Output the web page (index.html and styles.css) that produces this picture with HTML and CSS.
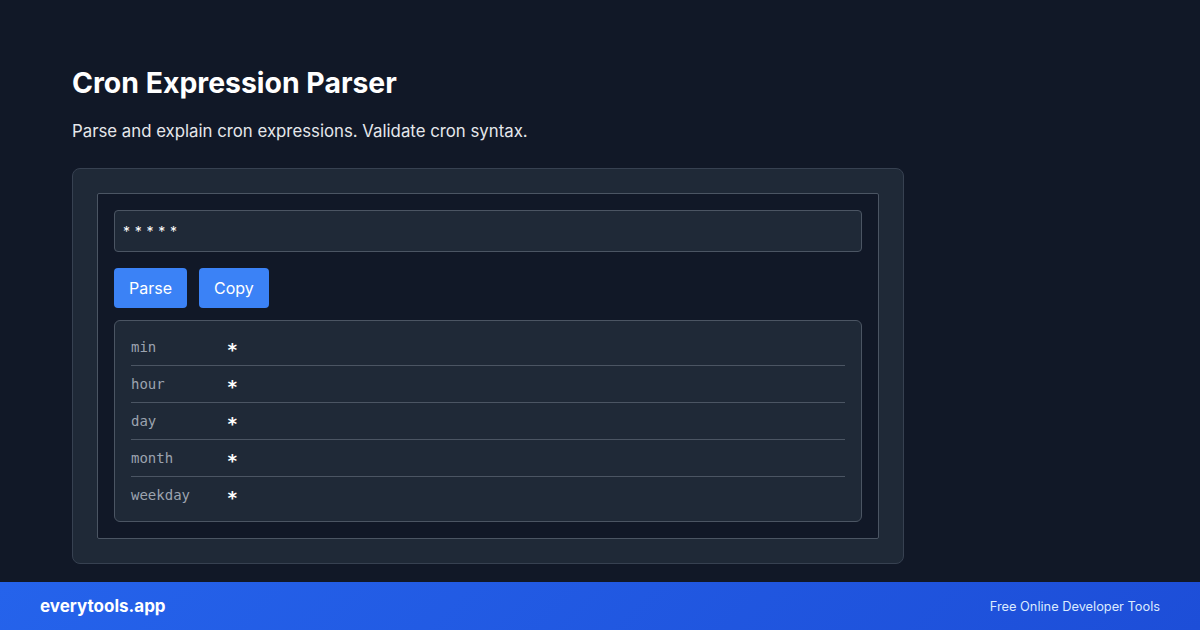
FILE: index.html
```html
<!DOCTYPE html>
<html lang="en">
<head>
  <meta charset="UTF-8" />
  <title>Cron Expression Parser - everytools.app</title>
  <link rel="stylesheet" href="styles.css">
</head>
<body>
  <main class="page">
    <h1>Cron Expression Parser</h1>
    <p class="lead">Parse and explain cron expressions. Validate cron syntax.</p>

    <div class="tool-card">
      <div class="tool-body">
        <input type="text" class="cron-input" value="* * * * *" />
        <div class="actions">
          <button class="btn-primary">Parse</button>
          <button class="btn-primary">Copy</button>
        </div>
        <div class="result">
          <div class="row"><span class="field">min</span><span class="value">∗</span></div>
          <div class="row"><span class="field">hour</span><span class="value">∗</span></div>
          <div class="row"><span class="field">day</span><span class="value">∗</span></div>
          <div class="row"><span class="field">month</span><span class="value">∗</span></div>
          <div class="row"><span class="field">weekday</span><span class="value">∗</span></div>
        </div>
      </div>
    </div>
  </main>

  <footer class="footer">
    <span class="brand">everytools.app</span>
    <span class="tagline">Free Online Developer Tools</span>
  </footer>
</body>
</html>
```

FILE: styles.css
```css
body {
  margin: 0;
  height: 630px;
  display: flex;
  flex-direction: column;
  background-color: #111827;
  color: white;
  font-family: 'Inter', sans-serif;
  overflow: hidden;
}

.page {
  flex: 1;
  padding: 65px 72px 0;
}

.page h1 {
  margin: 0;
  font-size: 28.4px;
  font-weight: 700;
  line-height: 36px;
}

.lead {
  margin: 17px 0 24px;
  font-size: 16.8px;
  line-height: 26px;
  color: #e5e7eb;
}

.tool-card {
  width: 782px;
  background: #1f2937;
  border: 1px solid #374151;
  border-radius: 8px;
  padding: 24px;
}

.tool-body {
  background: #111827;
  border: 1px solid #4b5563;
  border-radius: 2px;
  padding: 16px;
}

.cron-input {
  display: block;
  box-sizing: border-box;
  width: 100%;
  height: 42px;
  padding: 0 8px;
  background: #1f2937;
  border: 1px solid #4b5563;
  border-radius: 4px;
  color: white;
  font-family: 'Inter', sans-serif;
  font-size: 14px;
  letter-spacing: 0.4px;
}

.actions {
  display: flex;
  gap: 12px;
  margin: 16px 0 12px;
}

.btn-primary {
  background-color: #3b82f6;
  color: white;
  border: none;
  height: 40px;
  padding: 0 15px;
  border-radius: 4px;
  font-family: 'Inter', sans-serif;
  font-size: 16px;
  cursor: pointer;
}

.result {
  background: #1f2937;
  border: 1px solid #4b5563;
  border-radius: 6px;
  padding: 8px 16px;
}

.row {
  display: flex;
  align-items: center;
  height: 36px;
  font-family: 'DejaVu Sans Mono', monospace;
  font-size: 14px;
}

.row + .row {
  border-top: 1px solid #4b5563;
}

.field {
  width: 96px;
  color: #9ca3af;
}

.value {
  color: white;
  font-size: 18px;
  line-height: 20px;
  font-weight: 700;
}

.footer {
  height: 48px;
  display: flex;
  align-items: center;
  justify-content: space-between;
  padding: 0 40px;
  background: linear-gradient(135deg, #2563eb, #1d4ed8);
}

.brand {
  font-size: 17px;
  font-weight: 700;
}

.tagline {
  font-size: 12.8px;
  color: #dbeafe;
}
```
